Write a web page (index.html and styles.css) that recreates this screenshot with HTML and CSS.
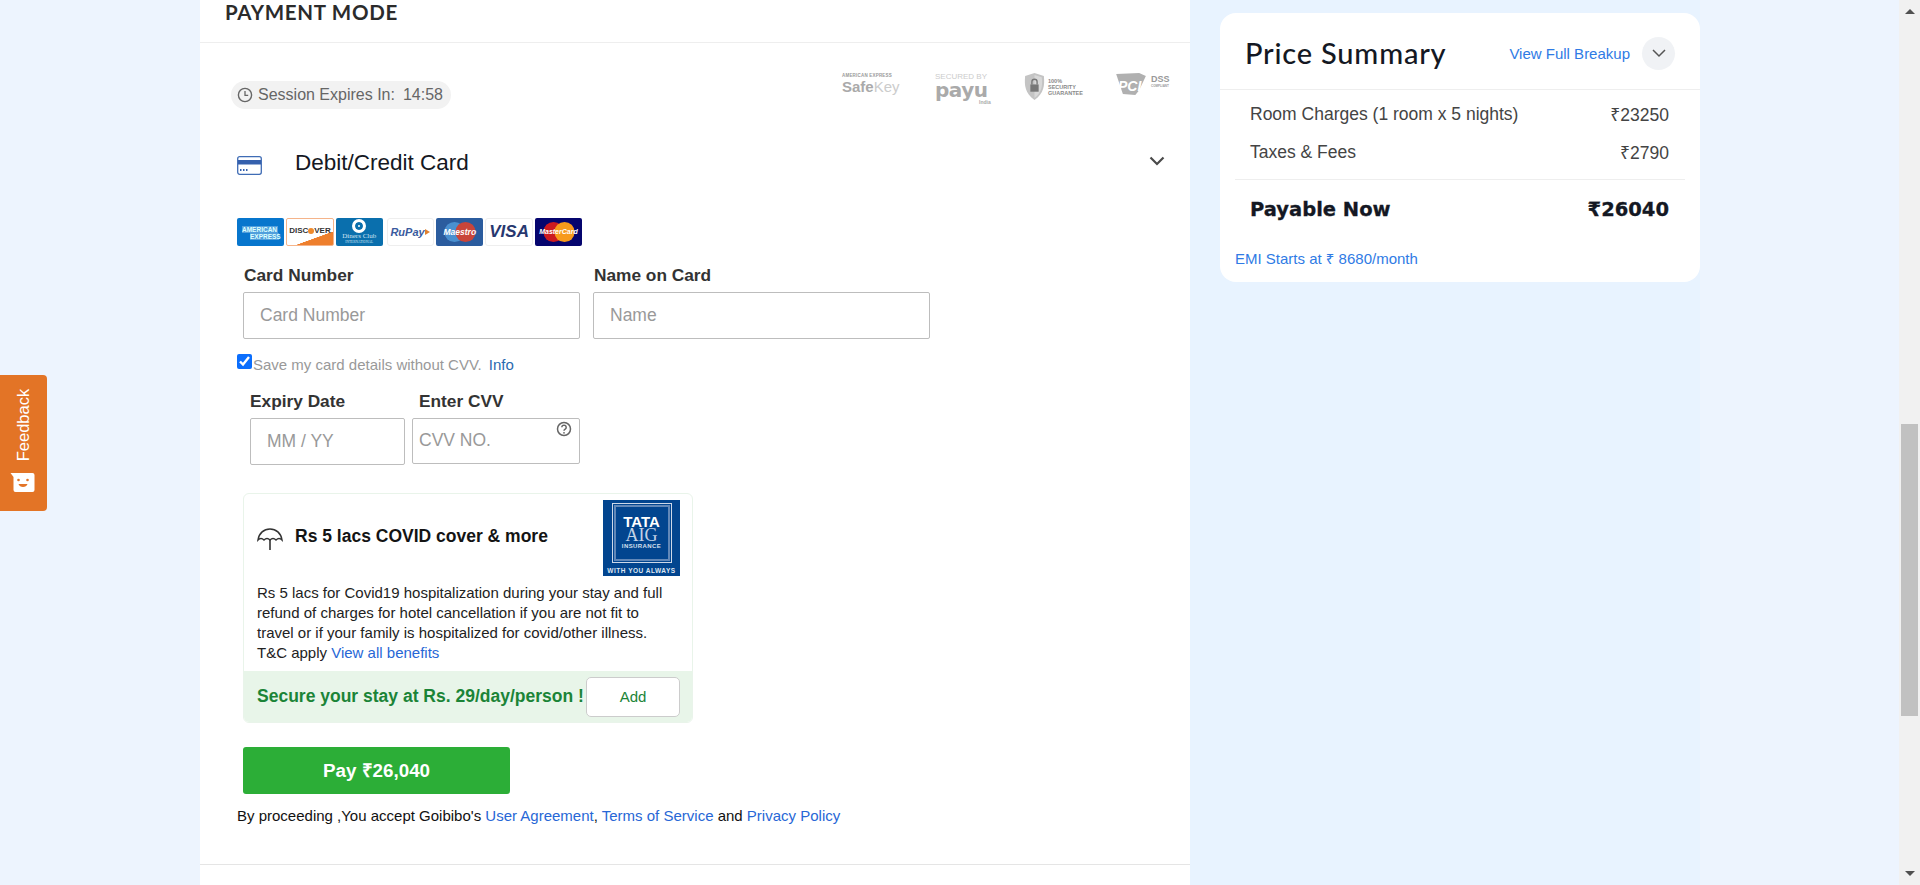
FILE: index.html
```html
<!DOCTYPE html>
<html lang="en">
<head>
<meta charset="utf-8">
<title>Payment Mode</title>
<link rel="stylesheet" href="styles.css">
</head>
<body>
<div class="gutter"></div>
<main class="main">
  <h2 class="mode-title">PAYMENT MODE</h2>
  <div class="session-row">
    <div class="session-pill">
      <svg class="clock" viewBox="0 0 16 16"><circle cx="8" cy="8" r="6.6" fill="none" stroke="#666" stroke-width="1.4"/><path d="M8 4v4.3h3.2" fill="none" stroke="#666" stroke-width="1.3"/></svg>
      <span>Session Expires In:</span><span class="timer">14:58</span>
    </div>
    <div class="trust">
      <div class="t-safekey"><small>AMERICAN EXPRESS</small><b>Safe</b><span>Key</span></div>
      <div class="t-payu"><small>SECURED BY</small><b>payu</b><i>India</i></div>
      <div class="t-secure">
        <svg class="shield" viewBox="0 0 20 26"><path d="M10 0 19 3c1 9 0 17-9 23C1 20 0 12 1 3z" fill="#c4c4c4"/><path d="M10 2v22c7-5 8-13 7-20z" fill="#d8d8d8"/><rect x="6" y="11" width="8" height="7" fill="#777"/><path d="M7.5 11V8.5a2.500 2.500 0 0 1 5 0V11" fill="none" stroke="#777" stroke-width="1.300"/></svg>
        <span>100%<br>SECURITY<br>GUARANTEE</span>
      </div>
      <div class="t-pci">
        <svg class="pci-mark" viewBox="0 0 32 24"><path d="M0 1 24 0l7 3-7 15-4 5-13-1z" fill="#b0b0b0"/></svg>
        <b class="pci-t">PCI</b>
        <span class="pci-d">DSS<small>COMPLIANT</small></span>
      </div>
    </div>
  </div>
  <div class="method-row">
    <svg class="card-icon" viewBox="0 0 25 19"><rect x=".7" y=".7" width="23.600" height="17.600" rx="2" fill="#fff" stroke="#3f6cb5" stroke-width="1.300"/><rect x="1" y="4" width="23" height="4.500" fill="#3560ad"/><path d="M3 14h1.500M6 14h1.500M9 14h1.500" stroke="#3560ad" stroke-width="2.200"/></svg>
    <span class="method-name">Debit/Credit Card</span>
    <svg class="method-chev" viewBox="0 0 16 10"><path d="M1.500 1.500 8 8l6.500-6.500" fill="none" stroke="#4a4a4a" stroke-width="2.200"/></svg>
  </div>

  <div class="cards">
    <div class="c c-amex"><span>AMERICAN</span><span class="ex">EXPRESS</span></div>
    <div class="c c-disc"><span>DISC<i></i>VER</span></div>
    <div class="c c-din"><em></em><span>Diners Club</span><small>INTERNATIONAL</small></div>
    <div class="c c-rupay"><span>RuPay</span><i></i></div>
    <div class="c c-mae"><svg viewBox="0 0 36 24"><circle cx="12" cy="12" r="11" fill="#4a90d0"/><circle cx="24" cy="12" r="11" fill="#c9453a"/></svg><span>Maestro</span></div>
    <div class="c c-visa"><span>VISA</span></div>
    <div class="c c-mc"><svg viewBox="0 0 36 24"><circle cx="12" cy="12" r="11" fill="#cc1a20"/><circle cx="24" cy="12" r="11" fill="#f79a1c"/></svg><span>MasterCard</span></div>
  </div>

  <div class="field-row">
    <label class="field f-num"><span class="lab">Card Number</span><input class="inp" placeholder="Card Number"></label>
    <label class="field f-name"><span class="lab">Name on Card</span><input class="inp" placeholder="Name"></label>
  </div>
  <div class="save-row">
    <input type="checkbox" checked class="chk">
    <span class="save-text">Save my card details without CVV.</span><a class="info">Info</a>
  </div>
  <div class="field-row row2">
    <label class="field f-exp"><span class="lab">Expiry Date</span><input class="inp" placeholder="MM / YY"></label>
    <label class="field f-cvv"><span class="lab">Enter CVV</span><input class="inp cvv" placeholder="CVV NO.">
      <svg class="help" viewBox="0 0 16 16"><circle cx="8" cy="8" r="6.500" fill="none" stroke="#666" stroke-width="1.500"/><path d="M5.800 6.300a2.200 2.200 0 1 1 3.400 1.900c-.8.5-1.200.9-1.200 1.600" fill="none" stroke="#666" stroke-width="1.500"/><circle cx="8" cy="11.800" r=".9" fill="#666"/></svg>
    </label>
  </div>

  <section class="ins">
    <div class="ins-head">
      <svg class="umb" viewBox="0 0 26 23"><path d="M1 12C2 5 7 1 13 1s11 4 12 11c-2-2-4-2-6 0-2-2-4-2-6 0-2-2-4-2-6 0-2-2-4-2-6 0z" fill="none" stroke="#333" stroke-width="1.500"/><path d="M13 11v11" stroke="#333" stroke-width="1.600"/></svg>
      <h3 class="ins-title">Rs 5 lacs COVID cover &amp; more</h3>
      <div class="tata"><div class="tata-box"><b>TATA</b><span>AIG</span><small>INSURANCE</small></div><em>WITH YOU ALWAYS</em></div>
    </div>
    <p class="ins-text">Rs 5 lacs for Covid19 hospitalization during your stay and full refund of charges for hotel cancellation if you are not fit to travel or if your family is hospitalized for covid/other illness. T&amp;C apply <a>View all benefits</a></p>
    <div class="ins-foot"><span class="secure">Secure your stay at Rs. 29/day/person !</span><button class="add">Add</button></div>
  </section>

  <button class="pay">Pay ₹26,040</button>
  <p class="legal">By proceeding ,You accept Goibibo's <a>User Agreement</a>, <a>Terms of Service</a> and <a>Privacy Policy</a></p>
  <hr class="end">
</main>
<aside class="side">
  <div class="summary">
    <div class="sum-head">
      <h2 class="sum-title">Price Summary</h2>
      <a class="breakup">View Full Breakup</a>
      <span class="circle"><svg viewBox="0 0 14 9"><path d="M1 1l6 6 6-6" fill="none" stroke="#555" stroke-width="1.500"/></svg></span>
    </div>
    <div class="sum-line first"><span>Room Charges (1 room x 5 nights)</span><span>₹23250</span></div>
    <div class="sum-line"><span>Taxes &amp; Fees</span><span>₹2790</span></div>
    <div class="sum-total"><span>Payable Now</span><span>₹26040</span></div>
    <a class="emi">EMI Starts at ₹ 8680/month</a>
  </div>
</aside>
<div class="gutter2"></div>
<div class="scrollbar">
  <i class="arr up"></i>
  <i class="thumb"></i>
  <i class="arr down"></i>
</div>
<button class="feedback">
  <span class="fb-text">Feedback</span>
  <svg class="fb-icon" viewBox="0 0 24 19"><path d="M0 0h22a2 2 0 0 1 2 2v15a2 2 0 0 1-2 2H5a2 2 0 0 1-2-2V4z" fill="#fff"/><circle cx="8" cy="7" r="1.300" fill="#e37426"/><circle cx="17" cy="7" r="1.300" fill="#e37426"/><path d="M8 11h9c-1 4-8 4-9 0z" fill="#e37426"/></svg>
</button>
</body>
</html>
```
FILE: styles.css
```css
* { box-sizing: border-box; }
html, body { margin: 0; height: 885px; overflow: hidden; }
body {
  display: flex;
  background: #edf4fe;
  font-family: "Liberation Sans", "Noto Sans", sans-serif;
  color: #141823;
}
.gutter { width: 200px; flex: none; }
.gutter2 { flex: 1; }
.main { width: 990px; flex: none; height: 885px; background: #fff; padding: 0; }
.mode-title {
  margin: 0; height: 43px; padding: 0 0 0 25px;
  border-bottom: 1px solid #eee;
  font: 700 20.5px/24px Lato, "Open Sans", sans-serif;
  letter-spacing: .7px; color: #2b2b2b;
}
.session-row { display: flex; justify-content: space-between; height: 112px; padding: 38px 0 0 31px; }
.session-pill {
  display: flex; align-items: center; width: 220px; height: 28px;
  background: #f2f2f2; border-radius: 14px; padding: 0 0 0 6px;
  font-size: 16px; color: #666;
}
.clock { width: 16px; height: 16px; margin-right: 5px; }
.timer { margin-left: 8px; }
.trust { display: flex; height: 36px; margin: -12px 0 0; color: #aaa; width: 350px; }
.t-safekey { width: 91px; padding: 4px 0 0 2px; line-height: 16px; color: #aaa; }
.t-safekey small { display: block; font-size: 4.500px; line-height: 6px; font-weight: 700; color: #999; white-space: nowrap; letter-spacing: .2px; }
.t-safekey b { font-weight: 700; color: #aaa; font-size: 15px; }
.t-safekey span { color: #ccc; font-size: 15px; }
.t-payu { width: 93px; padding: 3px 0 0 4px; position: relative; }
.t-payu small { display: block; font-size: 8px; line-height: 10px; color: #ccc; white-space: nowrap; }
.t-payu b { display: block; font: 700 20px/17px "DejaVu Sans", sans-serif; color: #aaa; letter-spacing: -.5px; }
.t-payu i { position: absolute; left: 48px; top: 30px; font-size: 5px; font-weight: 700; font-style: normal; color: #aaa; }
.t-secure { display: flex; width: 91px; padding: 4px 0 0 0; font-size: 5.500px; line-height: 6px; font-weight: 700; color: #888; }
.t-secure span { padding: 5px 0 0 3px; }
.shield { width: 21px; height: 27px; }
.t-pci { position: relative; width: 60px; padding-top: 4px; }
.pci-mark { width: 33px; height: 23px; display: block; }
.pci-t { position: absolute; left: 3px; top: 9px; color: #fff; font-size: 14px; font-weight: 700; font-style: italic; }
.pci-d { position: absolute; left: 36px; top: 6px; font-size: 9px; line-height: 9px; font-weight: 700; color: #999; }
.pci-d small { display: block; font-size: 3px; line-height: 4px; white-space: nowrap; }

.method-row { display: flex; align-items: center; height: 54px; padding-left: 37px; margin-top: -19px; }
.card-icon { width: 25px; height: 19px; margin-top: 4px; }
.method-name { font-size: 22.500px; margin-left: 33px; color: #141823; }
.method-chev { width: 16px; height: 10px; margin-left: auto; margin-right: 25px; margin-top: -4px; }

.cards { display: flex; gap: 2px; padding-left: 37px; margin-top: 28px; height: 28px; }
.c { width: 47.300px; height: 28px; border-radius: 2px; position: relative; overflow: hidden; flex: none; text-align: center; }
.c-amex { background: #0776cd; color: #dff; font-size: 6.500px; font-weight: 700; line-height: 7px; padding-top: 8px; }
.c-amex span { display: block; background: rgba(255,255,255,.3); width: 36px; margin-left: 5px; white-space: nowrap; text-align: left; }
.c-amex .ex { width: 29px; margin-left: 13px; }
.c-disc { border: 1px solid #f5b48a; background: linear-gradient(160deg, #fff 68%, #ee7f2d 69%); font-size: 8px; font-weight: 700; color: #333; line-height: 23px; white-space: nowrap; }
.c-disc i { display: inline-block; width: 6px; height: 6px; border-radius: 50%; background: #ef8a2c; vertical-align: -0.500px; }
.c-din { background: #0a6fad; color: #cfe4f2; }
.c-din em { display: block; width: 14px; height: 14px; margin: 1px auto 0; border-radius: 50%; background: #fff; border: 3px solid #fff; box-shadow: inset 0 0 0 3px #0a6fad; }
.c-din span { display: block; font: 7px/7px "Liberation Serif", serif; }
.c-din small { display: block; font: 3.500px/4px "Liberation Serif", serif; }
.c-rupay { background: #fff; border: 1px solid #eee; border-radius: 3px; margin-left: 2px; color: #3a5a9e; font-size: 11px; font-weight: 700; font-style: italic; line-height: 26px; padding-right: 6px; }
.c-rupay i { position: absolute; right: 3px; top: 10px; width: 0; height: 0; border-left: 5px solid #e0812f; border-top: 3px solid transparent; border-bottom: 3px solid transparent; }
.c-mae { background: #2b5c9e; }
.c-mae svg, .c-mc svg { position: absolute; left: 6px; top: 3px; width: 36px; height: 22px; }
.c-mae span, .c-mc span { position: relative; color: #fff; font-size: 7.500px; font-weight: 700; line-height: 28px; font-style: italic; }
.c-mae span { font-size: 8.500px; }
.c-visa { background: #fff; border: 1px solid #eee; border-radius: 3px; color: #27376f; font-size: 17px; font-weight: 700; font-style: italic; line-height: 26px; }
.c-mc { background: #05056e; }
.c-mc span { font-size: 7px; white-space: nowrap; }

.field-row { display: flex; margin-top: 20px; padding-left: 43px; gap: 13px; }
.field { display: flex; flex-direction: column; position: relative; }
.lab { font-size: 17.300px; font-weight: 700; line-height: 18px; color: #333; margin: 0 0 8px 1px; white-space: nowrap; }
.inp {
  height: 47px; border: 1px solid #bdbdbd; border-radius: 2px;
  padding: 0 16px 1px; font: 17.500px "Liberation Sans", sans-serif; background: #fff; outline: none;
}
.inp::placeholder { color: #999; opacity: 1; }
.f-num .inp, .f-name .inp { width: 337px; }
.f-exp { width: 155px; margin-left: 7px; }
.f-exp .inp { width: 155px; }
.f-exp .lab, .f-cvv .lab { margin-left: 0; }
.f-cvv { width: 168px; margin-left: -6px; }
.f-cvv .lab { margin-left: 7px; }
.f-cvv .inp { width: 168px; height: 46px; padding: 0 0 2px 6px; }
.help { position: absolute; right: 8px; top: 29px; width: 16px; height: 16px; }
.row2 { margin-top: 18px; }

.save-row { display: flex; align-items: center; height: 18px; margin-top: 16px; padding-left: 37px; font-size: 15px; }
.chk { margin: -5px 0 0; width: 15px; height: 15px; flex: none; accent-color: #0b6efd; }
.save-text { color: #999; margin-left: 1px; }
.info { color: #2a6ab0; margin-left: 7px; }
.row2 { margin-top: 19px; }

.ins { width: 450px; margin: 28px 0 0 43px; height: 230px; border: 1px solid #e9f4ea; border-radius: 6px; background: #fff; overflow: hidden; }
.ins-head { display: flex; padding: 6px 12px 0 13px; height: 89px; }
.umb { width: 26px; height: 23px; margin-top: 28px; }
.ins-title { margin: 26px 0 0 12px; font-size: 17.500px; line-height: 21px; font-weight: 700; color: #141414; flex: 1; }
.tata { width: 77px; height: 76px; background: #02458f; color: #fff; text-align: center; padding: 3px 0 0; }
.tata-box { width: 60px; height: 60px; margin: 0 auto; border: 1px solid #cdd8e8; outline: 2px solid #6288b8; outline-offset: -4px; padding-top: 12px; display: flex; flex-direction: column; align-items: center; }
.tata-box b { font-size: 15px; line-height: 12px; font-weight: 700; }
.tata-box span { font: 18px/15px "Liberation Serif", serif; color: #c3d2e6; }
.tata-box small { font-size: 6px; line-height: 7px; font-weight: 700; color: #d6e0ee; letter-spacing: .4px; }
.tata em { display: block; font-style: normal; font-size: 6.500px; line-height: 9px; font-weight: 700; white-space: nowrap; margin-top: 3px; letter-spacing: .5px; color: #dfe7f2; }
.ins-text { margin: 0; padding: 0 20px 0 13px; font-size: 15px; line-height: 20px; color: #222; height: 88px; }
.ins-text a { color: #2767d6; }
.ins-foot { display: flex; align-items: center; height: 51px; background: #e8f5e9; padding-left: 13px; }
.secure { font-size: 17.500px; font-weight: 700; color: #1b8437; white-space: nowrap; flex: 1; }
.add { width: 94px; height: 40px; flex: none; margin-right: 12px; border: 1px solid #ccc; border-radius: 5px; background: #fff; color: #1b8437; font: 15px "Liberation Sans", sans-serif; }

.pay { display: block; width: 267px; height: 47px; margin: 24px 0 0 43px; padding: 0 0 2px; border: 0; border-radius: 3px; background: #2cae37; color: #fff; font: 700 18.800px "Liberation Sans", sans-serif; }
.legal { margin: 14px 0 0 37px; font-size: 15px; line-height: 16px; color: #111; }
.legal a { color: #2767d6; }
.end { border: 0; border-top: 1px solid #e5e5e5; margin: 40px 0 0; }

.side { width: 510px; flex: none; background: #e8f3ff; padding: 13px 0 0 30px; }
.summary { background: #fff; height: 269px; border-radius: 16px; }
.sum-head { display: flex; align-items: center; height: 77px; padding: 4px 25px 0 25px; border-bottom: 1px solid #eee; }
.sum-title { margin: 0; font: 500 29px/32px Lato, "Open Sans", sans-serif; color: #141823; letter-spacing: .8px; flex: 1; }
.breakup { font-size: 15px; color: #2f7be5; margin-right: 12px; }
.circle { display: flex; align-items: center; justify-content: center; width: 33px; height: 33px; border-radius: 50%; background: #f0f2f5; }
.circle svg { width: 14px; height: 9px; }
.sum-line { display: flex; justify-content: space-between; height: 38px; align-items: center; padding: 0 31px 0 30px; font-size: 17.500px; color: #444; }
.sum-line.first { margin-top: 5px; }
.sum-total { display: flex; justify-content: space-between; align-items: center; margin: 8px 15px 0; padding: 0 16px 0 15px; height: 59px; border-top: 1px solid #eee; font: 700 19.500px "DejaVu Sans", sans-serif; color: #141823; -webkit-text-stroke: .3px #141823; }
.emi { display: block; margin: 12px 0 0 15px; font-size: 15px; line-height: 17px; color: #2f7be5; }

.scrollbar { width: 21px; flex: none; background: #f1f1f1; display: flex; flex-direction: column; align-items: center; }
.thumb { display: block; width: 17px; height: 292px; margin-top: 410px; background: #c1c1c1; }
.arr { display: block; width: 0; height: 0; border-left: 5px solid transparent; border-right: 5px solid transparent; }
.arr.up { border-bottom: 5px solid #505050; margin-top: 9px; }
.arr.down { border-top: 5px solid #505050; margin-top: auto; margin-bottom: 9px; }

.feedback {
  position: fixed; left: 0; top: 375px; width: 47px; height: 136px; padding: 0; border: 0;
  background: #e37426; border-radius: 0 4px 4px 0; color: #fff;
  font: 16.500px "Liberation Sans", sans-serif;
}
.fb-text { position: absolute; left: 23px; top: 50px; transform: translate(-50%, -50%) rotate(-90deg); white-space: nowrap; }
.fb-icon { position: absolute; left: 10px; top: 98px; width: 25px; height: 19px; }
```
